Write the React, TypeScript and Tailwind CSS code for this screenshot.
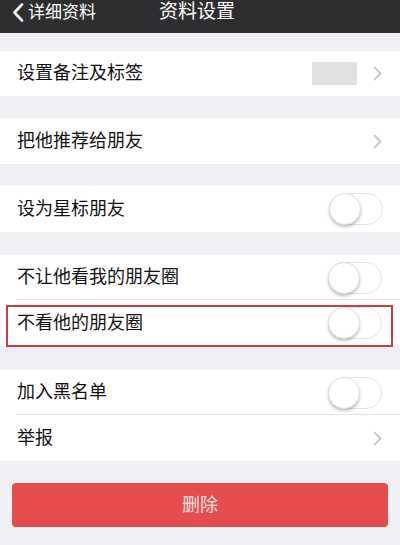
import React from "react";

const font = "font-['Liberation_Sans','Noto_Sans_CJK_SC',sans-serif]";

function Chevron() {
  return (
    <svg width="9" height="15" viewBox="0 0 9 15" className="shrink-0">
      <polyline
        points="1.5,1.5 7.5,7.5 1.5,13.5"
        fill="none"
        stroke="#c7c7cc"
        strokeWidth="1.8"
        strokeLinecap="round"
        strokeLinejoin="round"
      />
    </svg>
  );
}

function Toggle() {
  return (
    <div className="relative h-[32px] w-[54px] rounded-full border border-[#e3e3e6] bg-white">
      <div className="absolute left-[-1px] top-[-1px] h-[32px] w-[32px] rounded-full border border-[#e0e0e0] bg-white shadow-[0_2px_3px_rgba(0,0,0,0.25)]" />
    </div>
  );
}

type RowProps = {
  label: string;
  right?: React.ReactNode;
  height?: string;
  divider?: boolean;
  highlight?: boolean;
};

function Row({ label, right, height = "h-[46px]", divider, highlight }: RowProps) {
  return (
    <div className={`relative flex items-center bg-white pl-[17px] pr-[18px] ${height}`}>
      <span className="flex-1 text-[18px] text-[#111]">{label}</span>
      {right}
      {divider && (
        <div className="absolute bottom-0 left-[16px] right-0 h-px bg-[#e2e2e4]" />
      )}
      {highlight && (
        <div className="absolute bottom-[-1px] left-[6px] right-[7px] top-[5px] border-2 border-[#c9413f]" />
      )}
    </div>
  );
}

export default function App() {
  return (
    <div className={`h-[545px] w-[400px] overflow-hidden bg-[#efeff4] ${font}`}>
      {/* nav bar */}
      <div className="relative flex h-[33px] items-center bg-[#2e2e30] pb-[9px] text-white">
        <div className="flex items-center pl-[12px]">
          <svg width="12" height="19" viewBox="0 0 12 19">
            <polyline
              points="10,1.5 2.5,9.5 10,17.5"
              fill="none"
              stroke="white"
              strokeWidth="2.6"
              strokeLinecap="round"
              strokeLinejoin="round"
            />
          </svg>
          <span className="ml-[4px] text-[17px] leading-none">详细资料</span>
        </div>
        <span className="absolute left-[159px] top-[2px] text-[19px] leading-[20px]">资料设置</span>
      </div>

      <div className="h-[18px]" />
      <Row
        label="设置备注及标签"
        height="h-[45px]"
        right={
          <div className="flex items-center gap-[16px]">
            <div className="h-[23px] w-[45px] bg-[#e2e2e4]" />
            <Chevron />
          </div>
        }
      />

      <div className="h-[22px]" />
      <Row label="把他推荐给朋友" right={<Chevron />} />

      <div className="h-[22px]" />
      <Row label="设为星标朋友" right={<div className="-mr-[1px]"><Toggle /></div>} />

      <div className="h-[23px]" />
      <Row label="不让他看我的朋友圈" height="h-[45px]" divider right={<Toggle />} />
      <Row label="不看他的朋友圈" highlight right={<Toggle />} />

      <div className="h-[24px]" />
      <Row label="加入黑名单" height="h-[45px]" divider right={<Toggle />} />
      <Row label="举报" right={<Chevron />} />

      <div className="px-[12px] pt-[22px]">
        <button className="flex h-[44px] w-full items-center justify-center rounded-[4px] bg-[#e54c4c] text-[18px] text-[#fde3e3]">
          删除
        </button>
      </div>
    </div>
  );
}
